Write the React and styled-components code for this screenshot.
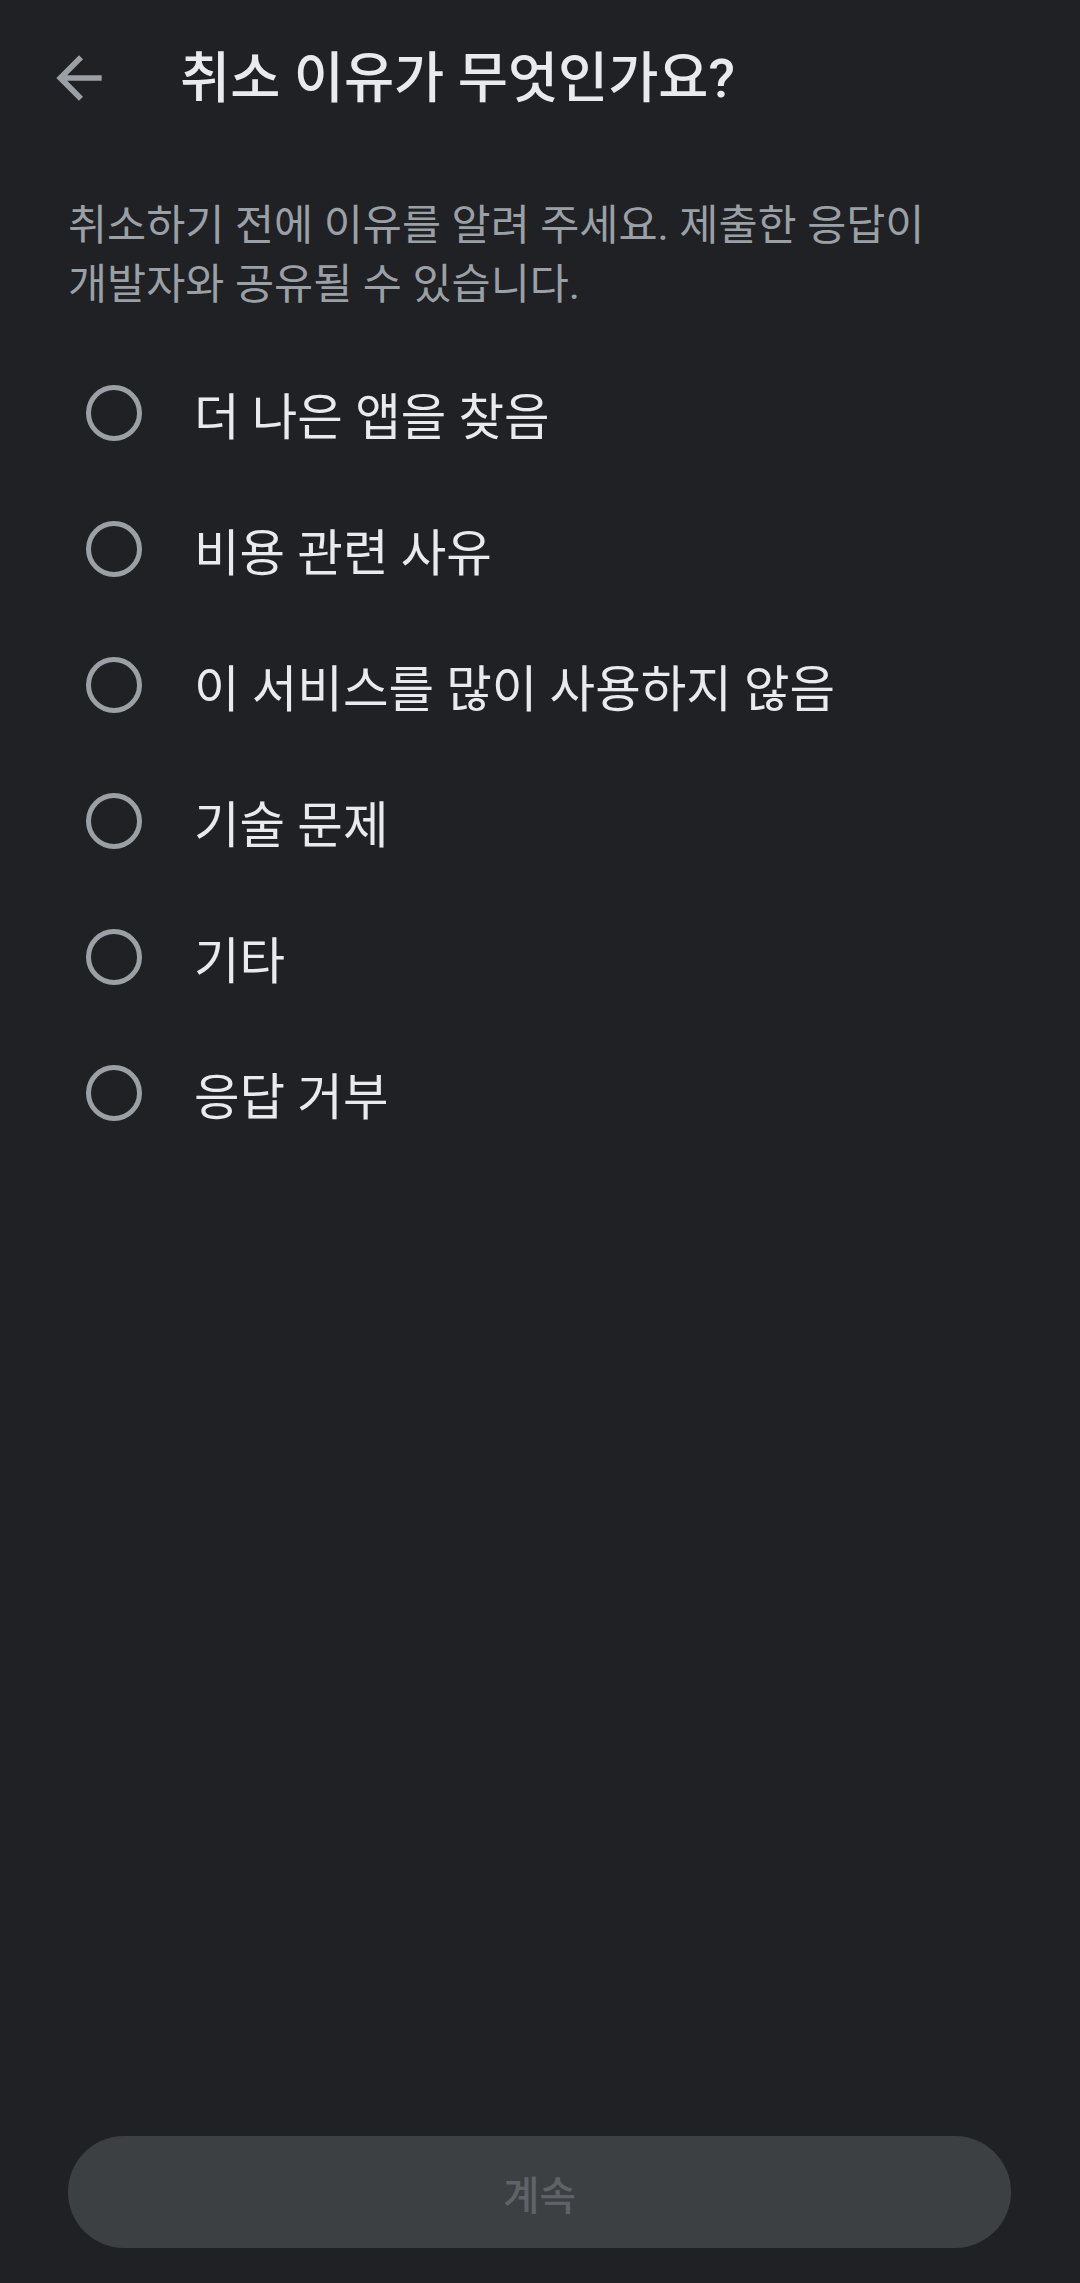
import React from 'react';
import styled, { createGlobalStyle } from 'styled-components';

const GlobalStyle = createGlobalStyle`
  html, body {
    margin: 0;
    padding: 0;
    background: #202124;
  }
  * {
    box-sizing: border-box;
  }
`;

const Screen = styled.div`
  width: 1080px;
  height: 2283px;
  display: flex;
  flex-direction: column;
  background: #202124;
  font-family: Roboto, 'Noto Sans CJK KR', sans-serif;
  color: #e8eaed;
  word-break: keep-all;
`;

const Header = styled.div`
  height: 156px;
  display: flex;
  align-items: center;
  padding-left: 45px;
`;

const BackButton = styled.button`
  width: 68px;
  height: 68px;
  padding: 0;
  border: none;
  background: none;
  display: flex;
  align-items: center;
  justify-content: center;
  color: #9aa0a6;
`;

const Title = styled.h1`
  margin: 0 0 0 67px;
  font-size: 54.5px;
  font-weight: 500;
  line-height: 1;
  color: #e8eaed;
`;

const Subtitle = styled.p`
  margin: 40px 0 0;
  padding: 0 68px;
  font-size: 42.5px;
  line-height: 59px;
  color: #9aa0a6;
`;

const Options = styled.div`
  margin-top: 31px;
  display: flex;
  flex-direction: column;
`;

const Option = styled.label`
  height: 136px;
  display: flex;
  align-items: center;
  padding-left: 86px;
`;

const Ring = styled.span`
  width: 56px;
  height: 56px;
  border-radius: 50%;
  border: 5px solid #9aa0a6;
  flex-shrink: 0;
`;

const OptionText = styled.span`
  margin-left: 52px;
  font-size: 49.5px;
  color: #e8eaed;
`;

const Footer = styled.div`
  margin-top: auto;
  padding: 0 69px 35px 68px;
`;

const ContinueButton = styled.button`
  width: 100%;
  height: 112px;
  border: none;
  border-radius: 56px;
  background: #3c4043;
  color: #5f6368;
  font-family: Roboto, 'Noto Sans CJK KR', sans-serif;
  font-size: 39.6px;
  font-weight: 500;
`;

const reasons = [
  '더 나은 앱을 찾음',
  '비용 관련 사유',
  '이 서비스를 많이 사용하지 않음',
  '기술 문제',
  '기타',
  '응답 거부',
];

const BackIcon = () => (
  <svg width="68" height="68" viewBox="0 0 24 24" fill="currentColor">
    <path d="M20 11H7.83l5.59-5.59L12 4l-8 8 8 8 1.41-1.41L7.83 13H20v-2z" />
  </svg>
);

const App = () => {
  return (
    <>
      <GlobalStyle />
      <Screen>
        <Header>
          <BackButton>
            <BackIcon />
          </BackButton>
          <Title>취소 이유가 무엇인가요?</Title>
        </Header>
        <Subtitle>
          취소하기 전에 이유를 알려 주세요. 제출한 응답이 개발자와 공유될 수 있습니다.
        </Subtitle>
        <Options>
          {reasons.map(reason => (
            <Option key={reason}>
              <Ring />
              <OptionText>{reason}</OptionText>
            </Option>
          ))}
        </Options>
        <Footer>
          <ContinueButton disabled>계속</ContinueButton>
        </Footer>
      </Screen>
    </>
  );
};

export default App;
